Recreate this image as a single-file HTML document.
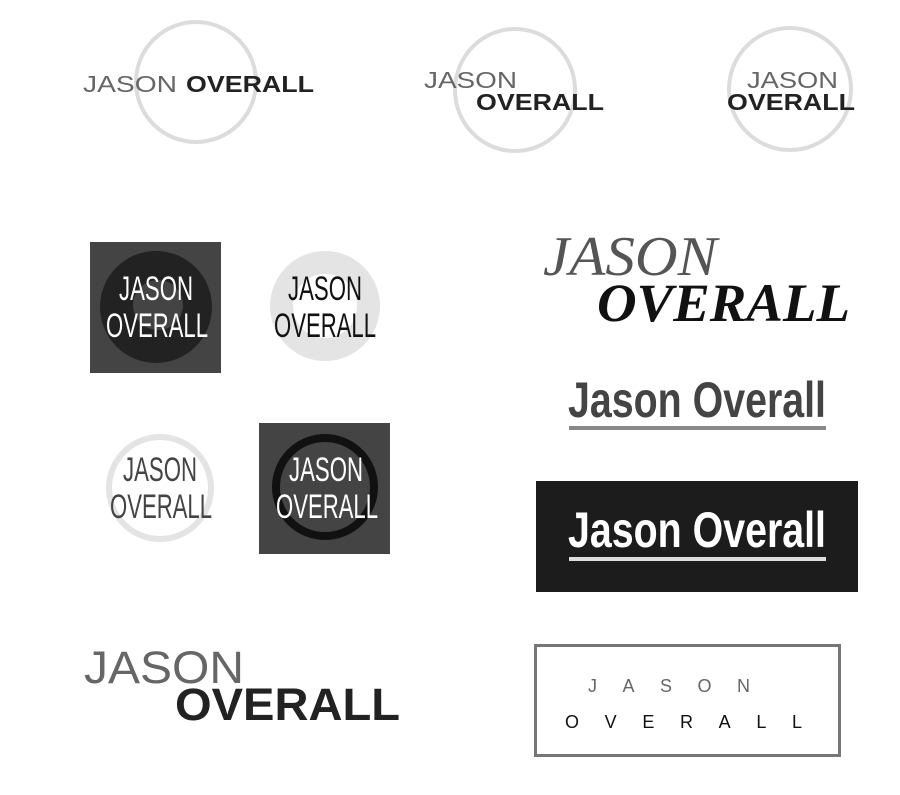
<!DOCTYPE html>
<html><head><meta charset="utf-8"><style>
html,body{margin:0;padding:0;background:#fff;width:900px;height:795px;overflow:hidden}
svg{display:block}
.s{font-family:"Liberation Sans",sans-serif}
</style></head><body>
<svg width="900" height="795" viewBox="0 0 900 795" xmlns="http://www.w3.org/2000/svg" class="s">
<ellipse cx="196" cy="82" rx="60" ry="60" fill="none" stroke="#dcdcdc" stroke-width="4"/>
<text x="83" y="92" font-size="23" fill="#666" textLength="94" lengthAdjust="spacingAndGlyphs">JASON</text>
<text x="186" y="92" font-size="23" font-weight="bold" fill="#222" textLength="128" lengthAdjust="spacingAndGlyphs">OVERALL</text>

<ellipse cx="515" cy="90" rx="60" ry="61" fill="none" stroke="#dcdcdc" stroke-width="4"/>
<text x="424" y="88" font-size="23" fill="#666" textLength="93" lengthAdjust="spacingAndGlyphs">JASON</text>
<text x="476" y="110" font-size="23" font-weight="bold" fill="#222" textLength="128" lengthAdjust="spacingAndGlyphs">OVERALL</text>

<ellipse cx="790" cy="89" rx="61" ry="61" fill="none" stroke="#dcdcdc" stroke-width="4"/>
<text x="747" y="88" font-size="23" fill="#666" textLength="91" lengthAdjust="spacingAndGlyphs">JASON</text>
<text x="727" y="110" font-size="23" font-weight="bold" fill="#222" textLength="128" lengthAdjust="spacingAndGlyphs">OVERALL</text>

<rect x="90" y="242" width="131" height="131" fill="#444"/>
<circle cx="156" cy="307" r="56" fill="#222"/>
<circle cx="158" cy="305" r="25" fill="#444"/>
<text x="119" y="300" font-size="34" fill="#fff" textLength="74" lengthAdjust="spacingAndGlyphs">JASON</text>
<text x="106" y="337" font-size="34" fill="#fff" textLength="102" lengthAdjust="spacingAndGlyphs">OVERALL</text>

<circle cx="325" cy="306" r="55" fill="#e4e4e4"/>
<circle cx="325" cy="306" r="32" fill="#fff"/>
<text x="288" y="300" font-size="34" fill="#111" textLength="74" lengthAdjust="spacingAndGlyphs">JASON</text>
<text x="274" y="337" font-size="34" fill="#111" textLength="102" lengthAdjust="spacingAndGlyphs">OVERALL</text>

<circle cx="160" cy="488" r="51" fill="#fff" stroke="#e4e4e4" stroke-width="6"/>
<text x="123" y="481" font-size="34" fill="#444" textLength="74" lengthAdjust="spacingAndGlyphs">JASON</text>
<text x="110" y="518" font-size="34" fill="#444" textLength="102" lengthAdjust="spacingAndGlyphs">OVERALL</text>

<rect x="259" y="423" width="131" height="131" fill="#444"/>
<circle cx="325" cy="487" r="49" fill="none" stroke="#111" stroke-width="8"/>
<text x="289" y="481" font-size="34" fill="#fff" textLength="74" lengthAdjust="spacingAndGlyphs">JASON</text>
<text x="276" y="518" font-size="34" fill="#fff" textLength="102" lengthAdjust="spacingAndGlyphs">OVERALL</text>

<text x="543" y="275" font-family="Liberation Serif,serif" font-style="italic" font-size="56" fill="#555" textLength="174" lengthAdjust="spacingAndGlyphs">JASON</text>
<text x="597" y="321" font-family="Liberation Serif,serif" font-style="italic" font-weight="bold" font-size="54" fill="#111" textLength="253" lengthAdjust="spacingAndGlyphs">OVERALL</text>

<text x="568" y="417" font-size="50" font-weight="bold" fill="#444" textLength="258" lengthAdjust="spacingAndGlyphs">Jason Overall</text>
<rect x="569" y="426" width="257" height="4" fill="#888"/>

<rect x="536" y="481" width="322" height="111" fill="#1c1c1c"/>
<text x="568" y="547" font-size="50" font-weight="bold" fill="#fff" textLength="258" lengthAdjust="spacingAndGlyphs">Jason Overall</text>
<rect x="569" y="557" width="257" height="4" fill="#ddd"/>

<rect x="535.5" y="645.5" width="304" height="110" fill="none" stroke="#777" stroke-width="3"/>
<text x="588" y="692" font-size="18" fill="#666" textLength="162" lengthAdjust="spacing">JASON</text>
<text x="565" y="728" font-size="18" fill="#111" textLength="237" lengthAdjust="spacing">OVERALL</text>

<text x="84" y="683" font-size="45" fill="#666" textLength="160" lengthAdjust="spacingAndGlyphs">JASON</text>
<text x="175" y="720" font-size="45" font-weight="bold" fill="#222" textLength="225" lengthAdjust="spacingAndGlyphs">OVERALL</text>
</svg>
</body></html>
